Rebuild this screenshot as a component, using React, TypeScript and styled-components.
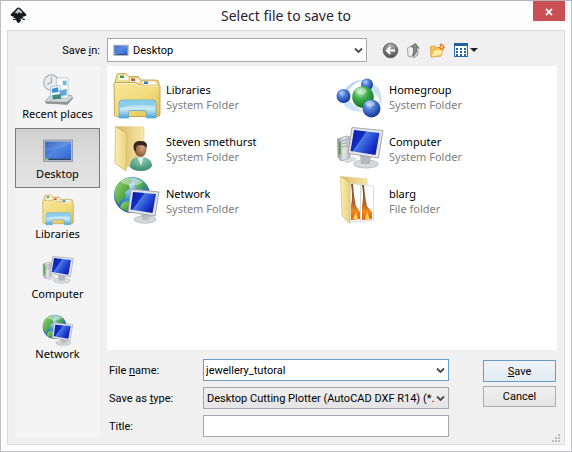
import React from 'react';
import styled, { createGlobalStyle, css } from 'styled-components';

const GlobalStyle = createGlobalStyle`
  *, *::before, *::after { box-sizing: border-box; }
  body { margin: 0; background: #fdfdfd; }
  button, input, select { font: inherit; color: inherit; margin: 0; }
`;

const uiFont = css`
  font-family: 'Noto Sans', 'Open Sans', sans-serif;
`;
const formFont = css`
  font-family: Roboto, 'Liberation Sans', sans-serif;
`;

const Dialog = styled.main`
  ${uiFont}
  display: flex;
  flex-direction: column;
  min-height: 100vh;
  padding: 0 6px 6px;
  border: 1px solid #c0c0c2;
  border-top-color: #b4b4b6;
  background: #fdfdfd;
  color: #000;
  font-size: 11px;
  line-height: 15px;
`;

const TitleBar = styled.header`
  display: grid;
  grid-template-columns: 32px 1fr 32px;
  align-items: start;
  height: 29px;
`;

const TitleIcon = styled.span`
  padding: 6px 0 0 3px;
  line-height: 0;
`;

const Title = styled.h1`
  margin: 0;
  padding-top: 5px;
  font-size: 14px;
  line-height: 20px;
  font-weight: 400;
  text-align: center;
  color: #2b2230;
`;

const CloseButton = styled.button`
  display: flex;
  align-items: center;
  justify-content: center;
  height: 20px;
  padding: 2px 0 0;
  border: 0;
  background: #c84f54;
`;

const Body = styled.form`
  flex: 1;
  display: flex;
  flex-direction: column;
  padding: 7px 7px 3px;
  border: 1px solid #dadada;
  background: #f0f0f0;
`;

const LookInRow = styled.div`
  ${formFont}
  display: flex;
  align-items: center;
  height: 24px;
  margin-bottom: 4px;
`;

const LookInLabel = styled.label`
  width: 85px;
  margin-right: 7px;
  text-align: right;
`;

const SelectShell = styled.div`
  flex: 1;
  display: grid;
  align-items: center;
  & > * { grid-area: 1 / 1; }
`;

const StartIcon = styled.span`
  z-index: 1;
  justify-self: start;
  padding-left: 6px;
  line-height: 0;
  pointer-events: none;
`;

const EndIcon = styled.span`
  z-index: 1;
  justify-self: end;
  padding-right: 4px;
  line-height: 0;
  pointer-events: none;
`;

const Select = styled.select<{ $withIcon?: boolean }>`
  appearance: none;
  width: 100%;
  min-width: 0;
  height: ${p => (p.$withIcon ? 24 : 22)}px;
  padding: 0 14px 0 ${p => (p.$withIcon ? 25 : 3)}px;
  border: 1px solid #a5a7aa;
  border-radius: 0;
  background: ${p => (p.$withIcon ? '#fff' : 'linear-gradient(#efefef, #e4e4e4)')};
  outline: none;
`;

const Tools = styled.div`
  display: flex;
  align-items: center;
  gap: 7px;
  width: 190px;
  padding-left: 15px;
`;

const ToolButton = styled.button`
  padding: 0;
  border: 0;
  background: none;
  line-height: 0;
`;

const Content = styled.div`
  flex: 1;
  display: flex;
  gap: 7px;
`;

const Places = styled.nav`
  display: flex;
  flex-direction: column;
  width: 85px;
  padding-top: 2px;
  background: #f4f4f4;
`;

const Place = styled.button<{ $selected?: boolean }>`
  ${uiFont}
  display: flex;
  flex-direction: column;
  align-items: center;
  height: 60px;
  padding: 5px 0 0;
  border: 1px solid ${p => (p.$selected ? '#7c7c7c' : 'transparent')};
  background: ${p => (p.$selected ? 'linear-gradient(#cfcfcf, #dcdcdc 40%, #e2e2e2)' : 'none')};
  white-space: nowrap;
`;

const Main = styled.div`
  flex: 1;
  display: flex;
  flex-direction: column;
  min-width: 0;
`;

const FileArea = styled.section`
  flex: 1;
  padding: 6px;
  background: #fff;
`;

const FileGrid = styled.ul`
  display: grid;
  grid-template-columns: 223px 1fr;
  grid-auto-rows: 52px;
  margin: 0;
  padding: 0;
  list-style: none;
`;

const FileItem = styled.button`
  ${uiFont}
  display: flex;
  gap: 5px;
  align-items: flex-start;
  padding: 0;
  border: 0;
  background: none;
  text-align: left;
  white-space: nowrap;
`;

const FileText = styled.span`
  display: grid;
  padding-top: 10px;
`;

const Kind = styled.span`
  color: #808080;
`;

const Fields = styled.div`
  ${formFont}
  display: grid;
  grid-template-columns: 94px 1fr 73px;
  grid-auto-rows: 22px;
  row-gap: 6px;
  align-items: center;
  padding: 9px 1px 0 2px;
`;

const FieldLabel = styled.label`
  grid-column: 1;
`;

const TextBox = styled.input<{ $active?: boolean }>`
  width: 100%;
  min-width: 0;
  height: 22px;
  padding: 0 ${p => (p.$active ? 20 : 3)}px 0 2px;
  border: 1px solid ${p => (p.$active ? '#6a9cc9' : '#a5a7aa')};
  border-radius: 0;
  background: #fff;
  outline: none;
`;

const PushButton = styled.button<{ $primary?: boolean }>`
  height: ${p => (p.$primary ? 22 : 21)}px;
  padding: 0;
  border: 1px solid ${p => (p.$primary ? '#6a9cc9' : '#acacac')};
  background: ${p => (p.$primary ? 'linear-gradient(#eef3f8, #e2ebf3)' : 'linear-gradient(#f0f0f0, #e5e5e5)')};
`;

const Commands = styled.div`
  grid-column: 3;
  grid-row: 1 / span 2;
  align-self: start;
  display: grid;
  row-gap: 4px;
  padding-top: 1px;
`;

const FieldCell = styled.div`
  margin-right: 34px;
  min-width: 0;
  display: grid;
`;

const GripCell = styled.div`
  display: flex;
  justify-content: flex-end;
  margin: -4px -4px -2px 0;
  line-height: 0;
`;

const HiddenSvg = styled.svg`
  position: absolute;
`;

const SharedPaints = () => (
  <HiddenSvg width="0" height="0" aria-hidden="true">
    <defs>
      <linearGradient id="folder" x1="0" y1="0" x2="1" y2="1">
        <stop offset="0" stopColor="#f7e59a" />
        <stop offset=".5" stopColor="#f3dc7c" />
        <stop offset="1" stopColor="#dfbd4c" />
      </linearGradient>
      <linearGradient id="folderBack" x1="0" y1="0" x2="1" y2="0">
        <stop offset="0" stopColor="#d9b860" />
        <stop offset="1" stopColor="#f8e8ac" />
      </linearGradient>
      <linearGradient id="flap" x1="0" y1="0" x2="1" y2="0">
        <stop offset="0" stopColor="#faeeb2" />
        <stop offset="1" stopColor="#ead27c" />
      </linearGradient>
      <linearGradient id="stand" x1="0" y1="0" x2="0" y2="1">
        <stop offset="0" stopColor="#a5d6ee" />
        <stop offset=".5" stopColor="#c9eaf7" />
        <stop offset="1" stopColor="#4aa5d6" />
      </linearGradient>
      <linearGradient id="screen" x1="0" y1="0" x2="1" y2=".6">
        <stop offset="0" stopColor="#0a17a0" />
        <stop offset=".42" stopColor="#1230c4" />
        <stop offset=".44" stopColor="#4c7ae2" />
        <stop offset=".75" stopColor="#2143d2" />
        <stop offset="1" stopColor="#101cab" />
      </linearGradient>
      <linearGradient id="desk" x1="0" y1="0" x2="1" y2="1">
        <stop offset="0" stopColor="#1f50bd" />
        <stop offset=".5" stopColor="#5186e2" />
        <stop offset="1" stopColor="#2f66d0" />
      </linearGradient>
      <linearGradient id="metal" x1="0" y1="0" x2="1" y2="0">
        <stop offset="0" stopColor="#8c8f92" />
        <stop offset=".5" stopColor="#e4e6e8" />
        <stop offset="1" stopColor="#b9bcc0" />
      </linearGradient>
      <radialGradient id="blueBall" cx=".38" cy=".3" r=".7">
        <stop offset="0" stopColor="#b9d3f8" />
        <stop offset=".4" stopColor="#4f7fd8" />
        <stop offset="1" stopColor="#16379a" />
      </radialGradient>
      <radialGradient id="greenBall" cx=".38" cy=".28" r=".7">
        <stop offset="0" stopColor="#c2f0c0" />
        <stop offset=".45" stopColor="#3fae4c" />
        <stop offset="1" stopColor="#147a2c" />
      </radialGradient>
      <radialGradient id="ocean" cx=".4" cy=".25" r=".8">
        <stop offset="0" stopColor="#c4eafb" />
        <stop offset=".45" stopColor="#3f93d8" />
        <stop offset="1" stopColor="#123f93" />
      </radialGradient>
      <linearGradient id="land" x1="0" y1="0" x2="1" y2="1">
        <stop offset="0" stopColor="#9bdc6e" />
        <stop offset="1" stopColor="#237f2c" />
      </linearGradient>
      <radialGradient id="skin" cx=".65" cy=".4" r=".7">
        <stop offset="0" stopColor="#d9a57c" />
        <stop offset="1" stopColor="#7d4e33" />
      </radialGradient>
      <radialGradient id="shirt" cx=".5" cy=".2" r=".8">
        <stop offset="0" stopColor="#8fcdb3" />
        <stop offset="1" stopColor="#3a8a72" />
      </radialGradient>
      <linearGradient id="fire" x1="0" y1="0" x2="0" y2="1">
        <stop offset="0" stopColor="#77503c" />
        <stop offset=".55" stopColor="#b5622e" />
        <stop offset=".75" stopColor="#f08a1c" />
        <stop offset="1" stopColor="#e05d08" />
      </linearGradient>
      <radialGradient id="steel" cx=".5" cy=".2" r=".8">
        <stop offset="0" stopColor="#b4b4b4" />
        <stop offset="1" stopColor="#4c4c4c" />
      </radialGradient>
    </defs>
  </HiddenSvg>
);

type IconProps = { size: number };

const Art = ({ size, children }: IconProps & { children: React.ReactNode }) => (
  <svg width={size} height={size} viewBox="0 0 48 48" aria-hidden="true">
    {children}
  </svg>
);

const LibrariesIcon = ({ size }: IconProps) => (
  <Art size={size}>
    <path d="M2 10 4 2.500Q4.300 1.500 5.500 1.500H13L16 4.500H24Q26.500 4.500 27 7L28 8H43Q46 8 46 11V20H2Z" fill="#f1dd93" stroke="#b99a4c" strokeWidth=".8" />
    <path d="M6 3H13L15 5.500V8H6Z" fill="#fffdf0" />
    <rect x="7" y="3.500" width="4" height="2.500" fill="#3f9a48" />
    <path d="M16.500 6H25L27 8V11H16.500Z" fill="#fffdf0" stroke="#c9ad62" strokeWidth=".5" />
    <rect x="18" y="6.500" width="4" height="2.500" fill="#d2502c" />
    <path d="M1 12Q1 10.500 2.500 10.500H22Q24 10.500 25 12L26 13H45.500Q47 13 47 14.500V42Q47 44.500 44.500 44.500H3.500Q1.500 44.500 1.500 42.500Z" fill="url(#folder)" stroke="#b8953f" strokeWidth=".8" />
    <path d="M28 9H42L45 13H30Z" fill="#fffdf0" stroke="#c9ad62" strokeWidth=".5" />
    <rect x="31" y="9.500" width="4" height="2.500" fill="#367fc0" />
    <path d="M2.300 12Q2.300 11.500 3 11.500H22L25 14H46" fill="none" stroke="#fff7cf" strokeWidth=".9" />
    <path d="M6 46V31Q6 28 9 28H40Q43 28 43 31V46H33.500V41Q33.500 38.500 31 38.500H18Q15.500 38.500 15.500 41V46Z" fill="url(#stand)" stroke="#58aad4" strokeWidth=".8" />
    <path d="M7 31Q7 29 9 29H40Q42 29 42 31L41 34Q24 31 7 36Z" fill="#77c3e6" opacity=".65" />
  </Art>
);

const UserFolderIcon = ({ size }: IconProps) => (
  <Art size={size}>
    <path d="M3 2.500 30 3Q31 3 31 5V40L13 43Z" fill="url(#folderBack)" stroke="#dfc67f" strokeWidth=".6" />
    <path d="M2.500 2.500 13 9Q14 10 14 12L13 47 3 40Q2 39 2 37Z" fill="url(#flap)" stroke="#cfb25c" strokeWidth=".7" />
    <path d="M17 43C17 36 20 33 27 33S39 36 39 42Q36 47 28 47 20 47 17 43Z" fill="url(#shirt)" />
    <path d="M24 32 28 42 31 32Z" fill="#d8f1e6" />
    <ellipse cx="27.500" cy="25" rx="6" ry="8" fill="url(#skin)" />
    <path d="M21 26C19 18 24 16.500 28 17 33 17 35 20 33.500 24 31 20 27 21 24 21.500 23 23 23 25 22.500 28Z" fill="#33271f" />
  </Art>
);

const Globe = () => (
  <>
    <circle cx="19" cy="19" r="18" fill="url(#ocean)" />
    <path d="M4 9C8 4 12 2 17 2L20 5 16 9 17 13 12 16 13 21 8 24 6 29C1 23 0 16 4 9Z" fill="url(#land)" />
    <path d="M22 2Q30 4 34 10L31 14 27 12 24 14 21 10 23 6Z" fill="url(#land)" opacity=".85" />
    <path d="M9 27 15 25 20 29 18 36Q10 35 7 31Z" fill="url(#land)" />
    <path d="M7 6Q18-2 30 6 22 13 7 6Z" fill="#fff" opacity=".4" />
  </>
);

const NetworkIcon = ({ size }: IconProps) => (
  <Art size={size}>
    <Globe />
    <ellipse cx="32" cy="43.500" rx="11" ry="3.700" fill="#d4d7da" stroke="#9fa3a8" strokeWidth=".6" />
    <path d="M28 35 37 37 36 44H29Z" fill="#babdc2" />
    <path d="M18 13 46 16 42 40 15 36Z" fill="#dfe2e6" stroke="#8f949b" strokeWidth=".8" />
    <path d="M20 16 43 18 39.500 37 17.500 33.500Z" fill="url(#screen)" />
  </Art>
);

const ComputerIcon = ({ size }: IconProps) => (
  <Art size={size}>
    <path d="M1.500 15 10 12 14 13V34L5 37 2 33Z" fill="url(#metal)" stroke="#8b8e91" strokeWidth=".6" />
    <path d="M3 18 4.800 17.500V31L3 30Z" fill="#57a04a" />
    <path d="M6 17 12 15.500M6 20 12 18.500M6 23 12 21.500" stroke="#85888b" strokeWidth=".7" />
    <path d="M8 36 18 33 20 36 10 39Z" fill="#dcdee0" stroke="#b9bcc0" strokeWidth=".5" />
    <ellipse cx="30" cy="40" rx="12.500" ry="4" fill="#d7dadd" stroke="#9fa3a8" strokeWidth=".6" />
    <path d="M24 31 35 33 34 40H25Z" fill="#b4b8bd" />
    <path d="M16 3.500 47 6.500 42.500 34 12 29.500Z" fill="#e3e5e8" stroke="#92969c" strokeWidth=".8" />
    <path d="M18 6 43.500 9 39.500 31 14.500 27Z" fill="url(#screen)" />
  </Art>
);

const HomegroupIcon = ({ size }: IconProps) => (
  <Art size={size}>
    <path d="M9 17Q17 7 29 8 17 10 12 20Z" fill="#b9d9ef" />
    <path d="M35 11Q48 16 45 33 41 20 33 17Z" fill="#c7e2f4" />
    <path d="M6 30Q13 42 28 39 17 35 13 27Z" fill="#cfe4f4" />
    <circle cx="31" cy="12.500" r="6" fill="url(#blueBall)" />
    <circle cx="7.500" cy="24" r="7" fill="url(#blueBall)" />
    <circle cx="27" cy="25" r="10.800" fill="url(#greenBall)" />
    <circle cx="35.500" cy="36.500" r="9" fill="url(#blueBall)" />
    <ellipse cx="25" cy="19" rx="6" ry="3.500" fill="#fff" opacity=".35" />
    <ellipse cx="34" cy="31.500" rx="5" ry="3" fill="#fff" opacity=".35" />
  </Art>
);

const PhotoFolderIcon = ({ size }: IconProps) => (
  <Art size={size}>
    <path d="M5 .500 31 3V40L14 46Z" fill="url(#folderBack)" stroke="#e0c884" strokeWidth=".6" />
    <path d="M25 8 37.500 10V44L24 46Z" fill="#fff" stroke="#cfcfcf" strokeWidth=".7" />
    <path d="M26 9H28Q29 22 31 30L36 36V43L26 44V30Q28 20 26 9Z" fill="url(#fire)" />
    <path d="M14 7 24.500 9V45L14 46Z" fill="#fff" stroke="#cfcfcf" strokeWidth=".7" />
    <path d="M15 8H17Q18 22 20 30L24 36V43L15 44V30Q17 20 15 8Z" fill="url(#fire)" />
    <path d="M17 43 20 36 22 43Z" fill="#ffd04a" />
    <path d="M29 43 31 36 34 43Z" fill="#ffd04a" />
    <path d="M4.500 .500 13 6Q14 7 14 9V47.500L7 41Q6 40 6 38Z" fill="url(#flap)" stroke="#d6bd6c" strokeWidth=".7" />
  </Art>
);

const DesktopIcon = ({ size }: IconProps) => (
  <Art size={size}>
    <rect x="2" y="9" width="44" height="32" fill="#b4bcc8" stroke="#7d8798" strokeWidth="1" />
    <rect x="4.500" y="11.500" width="39" height="25" fill="url(#desk)" />
    <path d="M4.500 36.500V26Q24 25 43.500 13V11.500H4.500Z" fill="#fff" opacity=".12" />
    <rect x="4.500" y="36.500" width="39" height="2.500" fill="#24447e" />
    <rect x="4.500" y="36.500" width="5" height="2.500" fill="#7ec26a" />
  </Art>
);

const RecentIcon = ({ size }: IconProps) => (
  <Art size={size}>
    <path d="M5 40 12 33 44 32 46 36 38 45 6 44Z" fill="#d5d7d8" stroke="#8e9192" />
    <path d="M6 44V41L37 42 46 35V37L38 46Z" fill="#8f9394" />
    <circle cx="14" cy="13" r="11.500" fill="#e9ecee" stroke="#b4b8ba" strokeWidth="2" />
    <path d="M14 5V13L8 15" fill="none" stroke="#8f9496" strokeWidth="1.500" />
    <path d="M22 6H39V36H22Z" fill="#fff" stroke="#a9b6bd" />
    <path d="M31 10H37V17H31Z" fill="#77b7dc" />
    <path d="M13 19 27 17 31 37 13 38Z" fill="#eff8fd" stroke="#8eb4c9" />
    <path d="M15 22 24 20 25 27 15 28Z" fill="#3e91cf" />
    <path d="M26 25 37 22V32L27 33Z" fill="#67a7d7" />
    <path d="M15 32 28 30 29 37 16 38Z" fill="#43887d" />
  </Art>
);

const AppLogo = () => (
  <svg width="17" height="17" viewBox="0 0 34 34" aria-hidden="true">
    <path d="M17 1Q19 1 21 3L32 14Q34 17 31 18L24 20 28 22Q25 24 21 23L22 27Q20 31 17 32 13 30 13 27L9 25 12 23 5 21 9 20 3 18Q0 17 2 14L13 3Q15 1 17 1Z" fill="#15181f" />
    <path d="M17 3 25 11 21 13 18 10 15 14 12 11 8 13Z" fill="#bfc9d8" />
    <path d="M6 25H10M25 25H30" stroke="#15181f" strokeWidth="2" />
  </svg>
);

const CloseGlyph = () => (
  <svg width="8" height="8" viewBox="0 0 8 8" aria-hidden="true">
    <path d="M1 .800 7 7.200M7 .800 1 7.200" stroke="#fff" strokeWidth="1.700" />
  </svg>
);

const Chevron = () => (
  <svg width="9" height="7" viewBox="0 0 9 7" aria-hidden="true">
    <path d="M1 1.500 4.500 5 8 1.500" fill="none" stroke="#4a4a4a" strokeWidth="1.800" />
  </svg>
);

const BackIcon = () => (
  <svg width="17" height="17" viewBox="0 0 17 17" aria-hidden="true">
    <circle cx="8.500" cy="8.500" r="7.300" fill="url(#steel)" stroke="#666" />
    <path d="M13 8.500H5M8.300 5 4.800 8.500 8.300 12" fill="none" stroke="#fff" strokeWidth="1.800" />
  </svg>
);

const UpIcon = () => (
  <svg width="16" height="17" viewBox="0 0 16 17" aria-hidden="true">
    <path d="M1.500 6 4 4.500 8 5.500V15.500L2 14Z" fill="#ededed" stroke="#a3a3a3" />
    <path d="M8 15.500 12 13V8L8 9Z" fill="#c9c9c9" stroke="#9a9a9a" strokeWidth=".8" />
    <path d="M6.500 14Q11.500 11 10.500 5.500L13 6.500 9.500 1.500 5 4.500 7.500 5Q8.500 9 6.500 14Z" fill="#8a8a8a" stroke="#5d5d5d" strokeWidth=".8" />
  </svg>
);

const NewFolderIcon = () => (
  <svg width="17" height="17" viewBox="0 0 17 17" aria-hidden="true">
    <path d="M1.500 4.500 6 4 7 5.500H12V14L2 15Z" fill="#f4c94f" stroke="#d79a2c" strokeWidth=".8" />
    <path d="M2 15 4.500 8 14.500 6.500 12 13.500Z" fill="#fdeca0" stroke="#e0a93c" strokeWidth=".8" />
    <path d="M12.500 1 13.300 3 15.500 2.500 14.700 4.500 16.500 5.500 14.500 6.300 14.500 8.500 12.700 7.200 11 8.500 11 6.300 9 5.500 11 4.500 10.500 2.500Z" fill="#ee7a2c" />
    <circle cx="12.800" cy="5" r="1.200" fill="#ffd98b" />
  </svg>
);

const ViewsIcon = () => (
  <svg width="26" height="16" viewBox="0 0 26 16" aria-hidden="true">
    <rect x="1.500" y="1.500" width="13" height="13" fill="#fff" stroke="#2d6ca8" />
    <path d="M1 1H15V4H1Z" fill="#1f5f9f" />
    {[3, 7, 11].map(x =>
      [6, 9, 12].map(y => <rect key={`${x}-${y}`} x={x} y={y} width="2" height="2" fill="#2a5fae" />)
    )}
    <path d="M17 6H25L21 10Z" fill="#222" />
  </svg>
);

const Grip = () => (
  <svg width="10" height="10" viewBox="0 0 10 10" aria-hidden="true">
    {[[7, 1], [4, 4], [7, 4], [1, 7], [4, 7], [7, 7]].map(([x, y]) => (
      <rect key={`${x}-${y}`} x={x} y={y} width="2" height="2" fill="#bdbdbd" />
    ))}
  </svg>
);

const places = [
  { name: 'Recent places', Icon: RecentIcon },
  { name: 'Desktop', Icon: DesktopIcon },
  { name: 'Libraries', Icon: LibrariesIcon },
  { name: 'Computer', Icon: ComputerIcon },
  { name: 'Network', Icon: NetworkIcon },
];

const files = [
  { name: 'Libraries', kind: 'System Folder', Icon: LibrariesIcon },
  { name: 'Homegroup', kind: 'System Folder', Icon: HomegroupIcon },
  { name: 'Steven smethurst', kind: 'System Folder', Icon: UserFolderIcon },
  { name: 'Computer', kind: 'System Folder', Icon: ComputerIcon },
  { name: 'Network', kind: 'System Folder', Icon: NetworkIcon },
  { name: 'blarg', kind: 'File folder', Icon: PhotoFolderIcon },
];

export default function App() {
  return (
    <Dialog>
      <GlobalStyle />
      <SharedPaints />
      <TitleBar>
        <TitleIcon><AppLogo /></TitleIcon>
        <Title>Select file to save to</Title>
        <CloseButton type="button" aria-label="Close"><CloseGlyph /></CloseButton>
      </TitleBar>
      <Body onSubmit={e => e.preventDefault()}>
        <LookInRow>
          <LookInLabel htmlFor="look-in">Save <u>i</u>n:</LookInLabel>
          <SelectShell>
            <StartIcon><DesktopIcon size={16} /></StartIcon>
            <Select id="look-in" $withIcon defaultValue="Desktop">
              <option>Desktop</option>
            </Select>
            <EndIcon><Chevron /></EndIcon>
          </SelectShell>
          <Tools>
            <ToolButton type="button" aria-label="Back"><BackIcon /></ToolButton>
            <ToolButton type="button" aria-label="Up one level"><UpIcon /></ToolButton>
            <ToolButton type="button" aria-label="New folder"><NewFolderIcon /></ToolButton>
            <ToolButton type="button" aria-label="Views"><ViewsIcon /></ToolButton>
          </Tools>
        </LookInRow>
        <Content>
          <Places aria-label="Places">
            {places.map(({ name, Icon }) => (
              <Place key={name} type="button" $selected={name === 'Desktop'}>
                <Icon size={32} />
                {name}
              </Place>
            ))}
          </Places>
          <Main>
            <FileArea aria-label="Files">
              <FileGrid>
                {files.map(({ name, kind, Icon }) => (
                  <li key={name}>
                    <FileItem type="button">
                      <Icon size={48} />
                      <FileText>
                        <span>{name}</span>
                        <Kind>{kind}</Kind>
                      </FileText>
                    </FileItem>
                  </li>
                ))}
              </FileGrid>
            </FileArea>
            <Fields>
              <FieldLabel htmlFor="file-name">File <u>n</u>ame:</FieldLabel>
              <FieldCell>
                <SelectShell>
                  <TextBox id="file-name" $active defaultValue="jewellery_tutoral" />
                  <EndIcon><Chevron /></EndIcon>
                </SelectShell>
              </FieldCell>
              <Commands>
                <PushButton type="submit" $primary><u>S</u>ave</PushButton>
                <PushButton type="button">Cancel</PushButton>
              </Commands>
              <FieldLabel htmlFor="file-type">Save as <u>t</u>ype:</FieldLabel>
              <FieldCell>
                <SelectShell>
                  <Select id="file-type" defaultValue="dxf">
                    <option value="dxf">Desktop Cutting Plotter (AutoCAD DXF R14) (*.dxf)</option>
                  </Select>
                  <EndIcon><Chevron /></EndIcon>
                </SelectShell>
              </FieldCell>
              <FieldLabel htmlFor="doc-title">Title:</FieldLabel>
              <FieldCell><TextBox id="doc-title" /></FieldCell>
            </Fields>
          </Main>
        </Content>
        <GripCell><Grip /></GripCell>
      </Body>
    </Dialog>
  );
}
